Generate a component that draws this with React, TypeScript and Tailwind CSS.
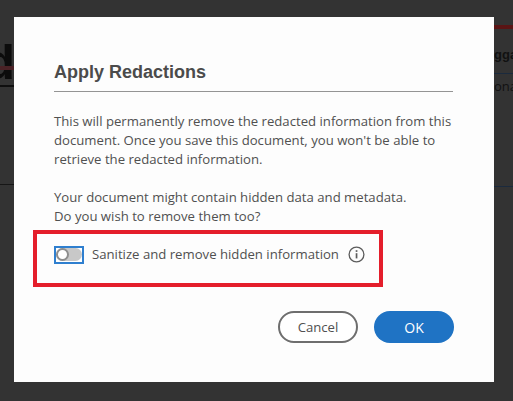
import React from 'react';

const body = "font-['Open_Sans',sans-serif] text-[13.17px] leading-[19px] text-[#505050]";

const LeftScraps = () => (
  <div className="relative flex h-full w-[14px] shrink-0 flex-col">
    <div className="mt-[44px] flex h-[36px] w-[12px] justify-end overflow-hidden">
      <span className="mr-[-3px] mt-[-12px] shrink-0 font-['Liberation_Sans',sans-serif] text-[50px] leading-[60px] font-bold text-[#0c0c0c]">d</span>
    </div>
    <div className="absolute left-0 top-[66px] h-[4px] w-[14px] bg-[#4a2226]" />
    <div className="mt-[5px] h-[2px] w-full bg-[#0f0f0f]" />
    <div className="mt-[97px] h-[1px] w-full bg-[#161616]" />
  </div>
);

const RightScraps = () => (
  <div className="flex h-full min-w-0 flex-1 flex-col overflow-hidden">
    <div className="mt-[25px] h-[4px] w-full bg-[#5a1414]" />
    <span className="mt-[18px] whitespace-nowrap font-['Liberation_Sans',sans-serif] text-[13px] leading-[16px] font-bold text-[#111111]">gga</span>
    <div className="mt-[10px] h-[1px] w-full bg-[#1b2a3d]" />
    <span className="mt-[4px] whitespace-nowrap font-['Open_Sans',sans-serif] text-[13px] leading-[16px] text-[#111111]">ona</span>
    <div className="mt-[92px] h-[1px] w-full bg-[#1b2a3d]" />
  </div>
);

const InfoIcon = () => (
  <svg width="17" height="17" viewBox="0 0 17 17" fill="none" className="shrink-0">
    <circle cx="8.5" cy="8.5" r="7.4" stroke="#5c5c5c" strokeWidth="1.3" />
    <rect x="7.7" y="7.2" width="1.7" height="5.2" fill="#5c5c5c" />
    <rect x="7.7" y="4.2" width="1.7" height="1.7" fill="#5c5c5c" />
  </svg>
);

export default function App() {
  return (
    <div className="flex h-[401px] w-[513px] overflow-hidden bg-[#333333]">
      <LeftScraps />
      <div className="mt-[17px] h-[365px] w-[480px] shrink-0 bg-[#fdfdfd] px-[40px] pt-[44px]">
        <h1 className="font-['Liberation_Sans',sans-serif] text-[18px] leading-[22px] font-bold text-[#4b4b4b]">Apply Redactions</h1>
        <div className="mt-[8px] h-[1px] w-[399px] bg-[#949494]" />
        <div className={`mt-[20px] whitespace-nowrap ${body}`}>
          <p>This will permanently remove the redacted information from this</p>
          <p>document. Once you save this document, you won't be able to</p>
          <p>retrieve the redacted information.</p>
          <p className="mt-[19px]">Your document might contain hidden data and metadata.</p>
          <p>Do you wish to remove them too?</p>
        </div>
        <div className="ml-[-21px] mt-[4px] flex h-[57px] w-[350px] items-center border-[4px] border-[#e41e2b] pb-[8px] pl-[17px]">
          <div className="flex h-[18px] w-[30px] items-center border-[2px] border-[#2f7fcf] bg-white">
            <div className="relative h-[13px] w-[26px] rounded-full bg-[#c8c8c8]">
              <div className="h-[13px] w-[13px] rounded-full border-[2px] border-[#8e8e8e] bg-white" />
            </div>
          </div>
          <span className={`ml-[8px] whitespace-nowrap ${body}`}>Sanitize and remove hidden information</span>
          <div className="ml-[9px]"><InfoIcon /></div>
        </div>
        <div className="mt-[24px] flex justify-end gap-[16px]">
          <button className={`h-[32px] w-[80px] rounded-full border-[2px] border-[#6e6e6e] bg-white ${body}`}>Cancel</button>
          <button className="h-[32px] w-[80px] rounded-full bg-[#1f73c4] font-['Open_Sans',sans-serif] text-[14px] text-white">OK</button>
        </div>
      </div>
      <RightScraps />
    </div>
  );
}
